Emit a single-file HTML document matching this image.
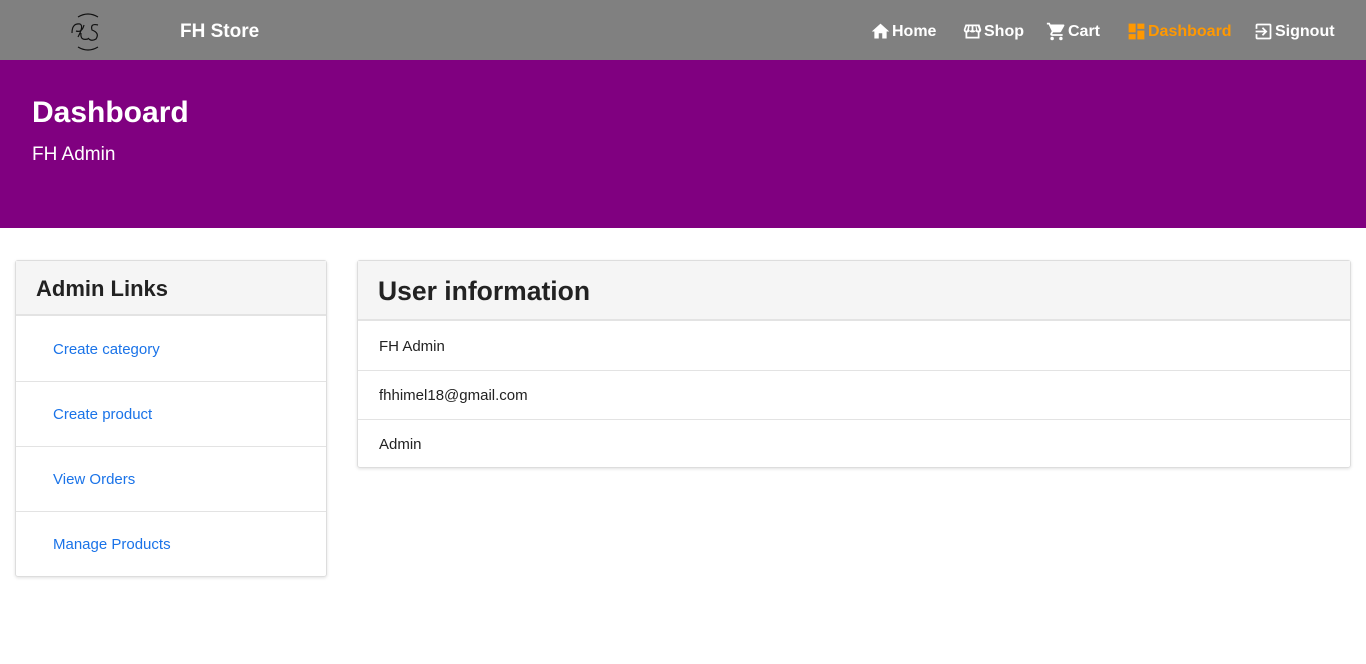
<!DOCTYPE html>
<html><head><meta charset="utf-8"><style>
*{box-sizing:border-box;margin:0;padding:0}
body{width:1366px;height:664px;background:#fff;font-family:"Liberation Sans",sans-serif;overflow:hidden;position:relative}
.nav{position:absolute;top:0;left:0;width:1366px;height:60px;background:#808080;box-shadow:0 2px 4px rgba(0,0,0,.3)}
.brand{position:absolute;left:180px;top:21px;color:#fff;font-weight:bold;font-size:19px}
.nav a{position:absolute;top:21px;color:#fff;font-size:16px;text-decoration:none;display:flex;align-items:center;gap:1px;font-weight:600}
.nav a svg{width:21px;height:21px;fill:#fff}
.hero{position:absolute;top:60px;left:0;width:1366px;height:168px;background:#800080;color:#fff}
.hero h1{position:absolute;left:32px;top:36px;font-size:30px;font-weight:bold}
.hero p{position:absolute;left:32px;top:84px;font-size:19px}
.card{position:absolute;border:1px solid #ddd;border-radius:3px;box-shadow:0 1px 3px rgba(0,0,0,.12)}
.hd{background:#f5f5f5;border-bottom:2px solid #e3e3e3;color:#222;font-weight:bold}
.row{border-top:1px solid #e3e3e3;font-size:15px;color:#222}
.l{color:#1a73e8}
</style></head><body>
<div class="nav">
<svg style="position:absolute;left:66px;top:11px;width:44px;height:42px" viewBox="0 0 44 42" fill="none" stroke="#111" stroke-width="1.2"><path d="M12 6 Q22 0 32 6"/><path d="M12 36 Q22 42 32 36"/><path d="M6 22 Q6 12 14 13 Q18 15 12 26 M10 20 Q16 22 18 14 M15 22 Q14 30 22 28"/><path d="M32 14 Q24 12 26 19 Q34 22 30 28 Q25 31 22 27"/></svg>
<div class="brand">FH Store</div>
<a style="left:870px"><svg viewBox="0 0 24 24"><path d="M10 20v-6h4v6h5v-8h3L12 3 2 12h3v8z"/></svg>Home</a>
<a style="left:962px"><svg viewBox="0 0 24 24"><path d="M4 4h16l2 6c0 1.5-1 3-2 3v7H4v-7c-1 0-2-1.5-2-3zm2 9v5h12v-5c-1 0-2-.7-2.5-1.5C15 12.3 14 13 12 13s-3-.7-3.5-1.5C8 12.3 7 13 6 13zm-.5-7L4 10c0 .8.6 1 1 1s1-.3 1-1l1-4zm3 0L8 10c0 .6.6 1 1.5 1s1.5-.4 1.5-1V6zm4.5 0v4c0 .6.6 1 1.5 1s1.5-.4 1.5-1l-.5-4zm3.5 0l1 4c0 .7.6 1 1 1s1-.2 1-1l-1.5-4z"/></svg>Shop</a>
<a style="left:1046px"><svg viewBox="0 0 24 24"><path d="M7 18a2 2 0 100 4 2 2 0 000-4zM1 2v2h2l3.6 7.6-1.4 2.4c-.8 1.4.2 3 1.8 3h12v-2H7l1.1-2h7.5c.8 0 1.4-.4 1.700-1l3.6-6.5A1 1 0 0020 4H5.2l-.9-2zm16 16a2 2 0 100 4 2 2 0 000-4z"/></svg>Cart</a>
<a style="left:1126px;color:#ff9800"><svg viewBox="0 0 24 24" style="fill:#ff9800"><path d="M3 13h8V3H3zm0 8h8v-6H3zm10 0h8V11h-8zm0-18v6h8V3z"/></svg>Dashboard</a>
<a style="left:1253px"><svg viewBox="0 0 24 24"><path d="M10.1 15.6l1.4 1.4 5-5-5-5-1.4 1.4 2.6 2.6H3v2h9.7zM19 3H5a2 2 0 00-2 2v4h2V5h14v14H5v-4H3v4a2 2 0 002 2h14a2 2 0 002-2V5a2 2 0 00-2-2z"/></svg>Signout</a>
</div>
<div class="hero"><h1>Dashboard</h1><p>FH Admin</p></div>
<div class="card" style="left:15px;top:260px;width:312px;height:317px">
<div class="hd" style="height:55px;padding:15px 20px;font-size:22px">Admin Links</div>
<div class="row l" style="height:65px;padding:25px 37px;border-top:none">Create category</div>
<div class="row l" style="height:65px;padding:24px 37px">Create product</div>
<div class="row l" style="height:65px;padding:24px 37px">View Orders</div>
<div class="row l" style="height:65px;padding:24px 37px">Manage Products</div>
</div>
<div class="card" style="left:357px;top:260px;width:994px;height:208px">
<div class="hd" style="height:60px;padding:15px 20px;font-size:26.5px">User information</div>
<div class="row" style="height:49px;padding:17px 21px;border-top:none">FH Admin</div>
<div class="row" style="height:49px;padding:16px 21px">fhhimel18@gmail.com</div>
<div class="row" style="height:49px;padding:16px 21px">Admin</div>
</div>
</body></html>
